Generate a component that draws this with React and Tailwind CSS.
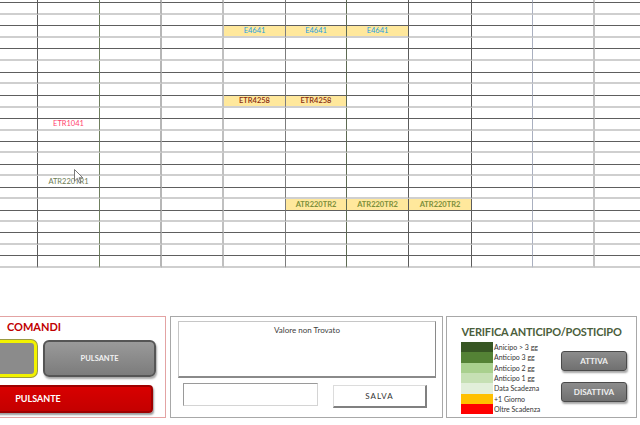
import React from "react";

// spreadsheet geometry
const colWidths = "grid-cols-[38px_62px_62px_62px_62px_61px_62px_63px_61px_62px_45px]";
const rowHeights =
  "grid-rows-[3px_12px_11px_12px_11px_12px_12px_11px_12px_12px_11px_12px_11px_11px_12px_11px_12px_11px_12px_11px_11px_12px_11px_12px]";
const ROWS = 24;

const colLines = [
  "border-r border-r-[#5b5b5b]",
  "border-r border-r-[#6f7f5e]",
  "border-r-2 border-r-[#b6b6b6]",
  "border-r-2 border-r-[#c0c0c0]",
  "border-r border-r-[#7d7d7d]",
  "border-r border-r-[#5d6a52]",
  "border-r border-r-[#5b5b5b]",
  "border-r border-r-[#5b5b5b]",
  "border-r border-r-[#aab0c0]",
  "border-r-2 border-r-[#c4c4c4]",
  "",
];

const darkRow = "border-b border-b-[#5e5e5e]";
const lightRow = "border-b-2 border-b-[#cfcfcf]";

const yellow = "bg-[#ffe89c]";

const cells = {
  "3-4": { text: "E4641", cls: `${yellow} text-[#1e9fe0]` },
  "3-5": { text: "E4641", cls: `${yellow} text-[#1e9fe0]` },
  "3-6": { text: "E4641", cls: `${yellow} text-[#1e9fe0]` },
  "9-4": { text: "ETR4258", cls: `${yellow} text-[#8a2c10] font-semibold` },
  "9-5": { text: "ETR4258", cls: `${yellow} text-[#8a2c10] font-semibold` },
  "11-1": { text: "ETR1041", cls: "text-[#ff3f6e]" },
  "16-1": { text: "ATR220TR1", cls: "text-[#6e7d55]" },
  "18-5": { text: "ATR220TR2", cls: `${yellow} text-[#7c8f3a] font-bold` },
  "18-6": { text: "ATR220TR2", cls: `${yellow} text-[#7c8f3a] font-bold` },
  "18-7": { text: "ATR220TR2", cls: `${yellow} text-[#7c8f3a] font-bold` },
};

const legend = [
  { label: "Anicipo > 3 gg", color: "bg-[#375623]", h: "h-[10px]" },
  { label: "Anticipo 3 gg", color: "bg-[#548235]", h: "h-[11px]" },
  { label: "Anticipo 2 gg", color: "bg-[#a9d08e]", h: "h-[10px]" },
  { label: "Anticipo 1 gg", color: "bg-[#c6e0b4]", h: "h-[10px]" },
  { label: "Data Scadezna", color: "bg-[#e2efda]", h: "h-[11px]" },
  { label: "+1 Giorno", color: "bg-[#ffc000]", h: "h-[10px]" },
  { label: "Oltre Scadenza", color: "bg-[#ff0000]", h: "h-[10px]" },
];

function Sheet() {
  const out = [];
  for (let r = 0; r < ROWS; r++) {
    for (let c = 0; c < 11; c++) {
      const cell = cells[`${r}-${c}`];
      out.push(
        <div
          key={`${r}-${c}`}
          className={`flex items-center justify-center overflow-hidden text-[7.5px] leading-none whitespace-nowrap ${colLines[c]} ${
            r % 2 === 0 ? darkRow : lightRow
          } ${cell ? cell.cls : ""}`}
        >
          {cell ? cell.text : null}
        </div>
      );
    }
  }
  return <div className={`grid ${colWidths} ${rowHeights} h-[268px]`}>{out}</div>;
}

function Cursor() {
  return (
    <svg className="absolute left-[74px] top-[169px]" width="10" height="15" viewBox="0 0 10 15">
      <path
        d="M0.5 0.5 L0.5 12 L3.3 9.4 L5.4 14 L7 13.3 L5 8.8 L8.8 8.8 Z"
        fill="#ffffff"
        stroke="#6b6b6b"
        strokeWidth="0.9"
        strokeLinejoin="round"
      />
    </svg>
  );
}

function Comandi() {
  return (
    <div className="-ml-[98px] w-[264px] h-[102px] shrink-0 border border-[#e3a3a3] flex flex-col">
      <div className="pt-[3px] text-center text-[11px] leading-[14px] font-bold text-[#c00000]">COMANDI</div>
      <div className="mt-[6px] flex justify-end gap-[6px] pr-[9px]">
        <div className="w-[120px] h-[37px] rounded-[6px] border-[3px] border-[#f2f200] bg-[#8b8b8b] shadow-[0_0_0_1px_#9a9a40]" />
        <button className="w-[113px] h-[37px] rounded-[6px] border-2 border-[#555555] bg-gradient-to-b from-[#9a9a9a] to-[#7c7c7c] shadow-[1px_2px_2px_rgba(0,0,0,0.35)] text-[7.5px] font-bold text-[#f2f2f2]">
          PULSANTE
        </button>
      </div>
      <div className="mt-[8px] flex justify-end pr-[12px]">
        <button className="w-[230px] h-[28px] rounded-[4px] border-2 border-[#9e0000] bg-gradient-to-b from-[#d80000] to-[#c40000] shadow-[1px_2px_2px_rgba(0,0,0,0.4)] text-[9px] font-bold text-white">
          PULSANTE
        </button>
      </div>
    </div>
  );
}

function Ricerca() {
  return (
    <div className="ml-[4px] w-[273px] h-[102px] shrink-0 border border-[#a8a8a8] flex flex-col">
      <div className="ml-[7px] mt-[4px] w-[258px] h-[57px] border border-[#c6c6c6] border-r-[#8a8a8a] border-b-2 border-b-[#8a8a8a] pt-[3px] text-center text-[8px] leading-[10px] text-[#404040]">
        Valore non Trovato
      </div>
      <div className="flex items-start mt-[5px] ml-[12px]">
        <div className="w-[135px] h-[23px] border border-[#9a9a9a] border-r-[#d4d4d4] border-b-[#d4d4d4] bg-white" />
        <button className="ml-[15px] mt-[2px] w-[94px] h-[23px] border border-[#dcdcdc] border-r-2 border-r-[#808080] border-b-2 border-b-[#808080] bg-white text-[8px] tracking-[1px] text-[#333333]">
          SALVA
        </button>
      </div>
    </div>
  );
}

function Verifica() {
  return (
    <div className="ml-[3px] w-[191px] h-[102px] shrink-0 border border-[#a8a8a8] flex flex-col">
      <div className="mt-[8px] text-center text-[11px] leading-[14px] font-bold tracking-[-0.2px] text-[#4b5e3b]">
        VERIFICA ANTICIPO/POSTICIPO
      </div>
      <div className="mt-[3px] flex">
        <div className="ml-[14px] flex flex-col">
          {legend.map((l) => (
            <div key={l.label} className={`flex items-center ${l.h}`}>
              <div className={`w-[32px] h-full ${l.color}`} />
              <span className="ml-[1px] text-[7px] leading-none text-[#333333] whitespace-nowrap">{l.label}</span>
            </div>
          ))}
        </div>
        <div className="ml-auto mr-[9px] pt-[9px] flex flex-col gap-[11px]">
          <button className="w-[66px] h-[20px] rounded-[3px] border border-[#4a4a4a] bg-gradient-to-b from-[#8c8c8c] to-[#707070] shadow-[1px_2px_2px_rgba(0,0,0,0.35)] text-[8px] font-bold text-[#f0f0f0]">
            ATTIVA
          </button>
          <button className="w-[66px] h-[20px] rounded-[3px] border border-[#4a4a4a] bg-gradient-to-b from-[#8c8c8c] to-[#707070] shadow-[1px_2px_2px_rgba(0,0,0,0.35)] text-[8px] font-bold text-[#f0f0f0]">
            DISATTIVA
          </button>
        </div>
      </div>
    </div>
  );
}

export default function App() {
  return (
    <div className="relative w-[640px] h-[425px] overflow-hidden bg-white font-['Lato','Open_Sans',sans-serif]">
      <Sheet />
      <Cursor />
      <div className="mt-[48px] flex items-start">
        <Comandi />
        <Ricerca />
        <Verifica />
      </div>
    </div>
  );
}
